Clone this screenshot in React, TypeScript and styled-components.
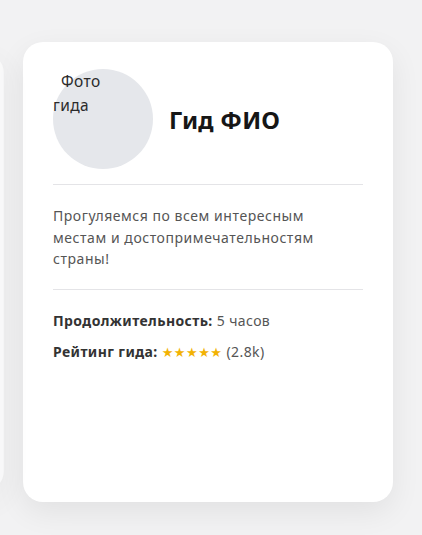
import React from "react";
import styled, { createGlobalStyle } from "styled-components";

const GlobalStyle = createGlobalStyle`
  html, body {
    margin: 0;
    padding: 0;
    background: #f2f2f3;
    overflow: hidden;
  }
  body {
    font-family: "Noto Sans", "DejaVu Sans", sans-serif;
  }
`;

const Stage = styled.div`
  height: 535px;
  overflow: hidden;
  box-sizing: border-box;
  padding-top: 42px;
`;

const Track = styled.div`
  display: flex;
  align-items: flex-start;
  gap: 10px;
  transform: translateX(-357px);
`;

const Card = styled.div<{ $faded?: boolean }>`
  flex: 0 0 370px;
  width: 370px;
  height: 460px;
  box-sizing: border-box;
  padding: 27px 30px 30px;
  background: #ffffff;
  border-radius: 20px;
  box-shadow: 0 10px 30px rgba(0, 0, 0, 0.07);
  display: flex;
  flex-direction: column;
  transform: ${(p) => (p.$faded ? "scale(0.95)" : "none")};
  opacity: ${(p) => (p.$faded ? 0.55 : 1)};
`;

const Header = styled.div`
  display: flex;
  align-items: center;
  gap: 16px;
`;

const Avatar = styled.div`
  flex: 0 0 100px;
  width: 100px;
  height: 100px;
  border-radius: 50%;
  background: #e5e7eb;
  font-size: 15.5px;
  line-height: 24px;
  letter-spacing: 0.4px;
  color: #2b2b2b;
  text-indent: 8px;
  box-sizing: border-box;
  padding-right: 30px;
`;

const Name = styled.h2`
  margin: 0;
  font-size: 24px;
  font-weight: 700;
  letter-spacing: 0.2px;
  color: #161616;
`;

const Divider = styled.hr<{ $top?: number }>`
  border: none;
  height: 1px;
  background: #e4e4e7;
  margin: ${(p) => p.$top ?? 0}px 0 0;
`;

const Description = styled.p`
  margin: 20px 0 19px;
  padding-right: 10px;
  font-size: 14px;
  line-height: 21.5px;
  letter-spacing: 0.55px;
  color: #555555;
`;

const Stats = styled.div`
  display: flex;
  flex-direction: column;
  gap: 10px;
  margin-top: 20px;
`;

const StatRow = styled.div`
  font-size: 14px;
  line-height: 21px;
  letter-spacing: 0.4px;
  color: #555555;
`;

const Label = styled.span`
  font-weight: 700;
  color: #333333;
`;

const Stars = styled.span`
  color: #f2b203;
  font-size: 13px;
  letter-spacing: 0.5px;
`;

export default function App() {
  return (
    <>
      <GlobalStyle />
      <Stage>
        <Track>
          <Card $faded />
          <Card>
            <Header>
              <Avatar>Фото гида</Avatar>
              <Name>Гид ФИО</Name>
            </Header>
            <Divider $top={15} />
            <Description>
              Прогуляемся по всем интересным местам и достопримечательностям
              страны!
            </Description>
            <Divider />
            <Stats>
              <StatRow>
                <Label>Продолжительность:</Label> 5 часов
              </StatRow>
              <StatRow>
                <Label>Рейтинг гида:</Label> <Stars>★★★★★</Stars> (2.8k)
              </StatRow>
            </Stats>
          </Card>
        </Track>
      </Stage>
    </>
  );
}
